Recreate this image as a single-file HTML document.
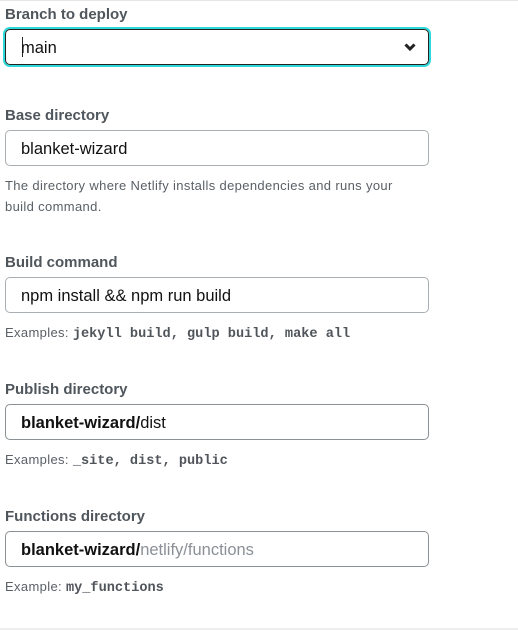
<!DOCTYPE html>
<html><head><meta charset="utf-8"><style>
html,body{margin:0;padding:0;background:#fff;width:518px;height:631px;overflow:hidden;position:relative;font-family:"Liberation Sans",sans-serif}
.top{position:absolute;left:0;top:0;width:518px;height:1px;background:#e6e6e4}
.bot{position:absolute;left:0;top:628px;width:518px;height:2px;background:#eeeeee}
.lbl{position:absolute;left:5px;font-size:15px;font-weight:bold;color:#4f565c;line-height:20px}
.inp{position:absolute;left:5px;width:422px;height:34px;border:1px solid #8a9094;border-radius:5px;box-sizing:content-box;font-size:16.5px;color:#111;line-height:34px}
.inp span.t{position:absolute;left:15px;top:1px}
.help{position:absolute;left:5px;font-size:13px;letter-spacing:0.35px;color:#5a6066;line-height:21px}
.mono{font-family:"Liberation Mono",monospace;font-weight:bold;color:#50555b;font-size:13.6px;letter-spacing:0}
.b{font-weight:bold;color:#111}
.g{color:#8a9096}
</style></head><body>
<div class="top"></div>
<div class="lbl" style="top:5px">Branch to deploy</div>
<div class="inp" style="top:29px;left:5px;width:422px;height:34px;border:1px solid #222;box-shadow:0 0 0 2px #30d9d9">
 <span style="position:absolute;left:16px;top:7px;width:1px;height:20px;background:#222"></span>
 <span class="t">main</span>
 <svg style="position:absolute;right:12px;top:13px" width="12" height="9" viewBox="0 0 12 9"><path d="M1.5 1.5L6 6l4.5-4.5" fill="none" stroke="#222" stroke-width="3"/></svg>
</div>
<div class="lbl" style="top:106px">Base directory</div>
<div class="inp" style="top:130px;border-color:#a8aeb2"><span class="t">blanket-wizard</span></div>
<div class="help" style="top:175px">The directory where Netlify installs dependencies and runs your<br>build command.</div>
<div class="lbl" style="top:253px">Build command</div>
<div class="inp" style="top:277px;border-color:#a8aeb2"><span class="t">npm install &amp;&amp; npm run build</span></div>
<div class="help" style="top:322px">Examples: <span class="mono">jekyll build, gulp build, make all</span></div>
<div class="lbl" style="top:380px">Publish directory</div>
<div class="inp" style="top:404px"><span class="t"><span class="b">blanket-wizard/</span>dist</span></div>
<div class="help" style="top:449px">Examples: <span class="mono">_site, dist, public</span></div>
<div class="lbl" style="top:507px">Functions directory</div>
<div class="inp" style="top:531px"><span class="t"><span class="b">blanket-wizard/</span><span class="g">netlify/functions</span></span></div>
<div class="help" style="top:576px">Example: <span class="mono">my_functions</span></div>
<div class="bot"></div>
</body></html>
